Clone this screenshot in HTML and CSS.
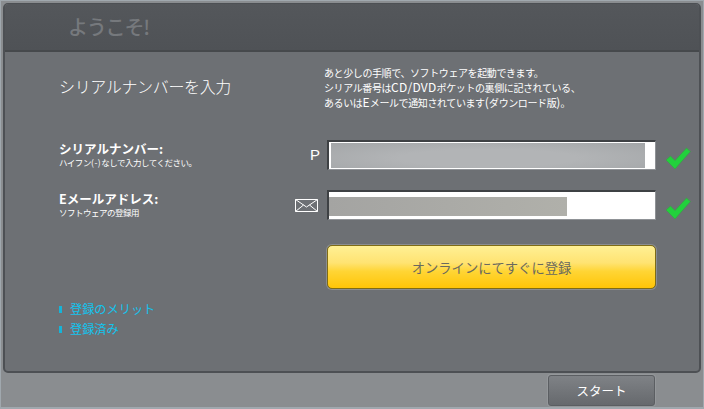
FILE: index.html
```html
<!DOCTYPE html>
<html lang="ja">
<head>
<meta charset="utf-8">
<title>ようこそ!</title>
<link rel="stylesheet" href="styles.css">
</head>
<body>
<div class="window">
  <main class="panel">
    <header class="panel-head"><h1>ようこそ!</h1></header>
    <div class="panel-body">
      <section class="intro">
        <h2>シリアルナンバーを入力</h2>
        <p>あと少しの手順で、ソフトウェアを起動できます。<br>シリアル番号は<span class="lat">CD/DVD</span>ポケットの裏側に記されている、<br>あるいは<span class="lat">E</span>メールで通知されています<span class="lat">(</span>ダウンロード版<span class="lat">)</span>。</p>
      </section>
      <section class="form">
        <div class="row row-serial">
          <div class="label"><strong>シリアルナンバー:</strong><small>ハイフン<span class="par">(-)</span>なしで入力してください。</small></div>
          <span class="prefix">P</span>
          <div class="field"><span class="redact redact-serial"></span></div>
          <svg class="check" viewBox="0 0 26 22"><path d="M1 13 L5.500 9 L10 13.500 L21.500 1 L25.500 4.500 L10 22 Z" fill="#22d13c" stroke="#3f9a4c" stroke-width=".8"/></svg>
        </div>
        <div class="row row-mail">
          <div class="label"><strong>Eメールアドレス:</strong><small>ソフトウェアの登録用</small></div>
          <svg class="prefix-icon" viewBox="0 0 23 13"><path d="M.5.500h22v12H.5zM.5.500l11 7.500 11-7.500M.5 12.500l8-6.500M22.500 12.500l-8-6.500" fill="none" stroke="#fff" stroke-width="1"/></svg>
          <div class="field"><span class="redact redact-mail"></span></div>
          <svg class="check" viewBox="0 0 26 22"><path d="M1 13 L5.500 9 L10 13.500 L21.500 1 L25.500 4.500 L10 22 Z" fill="#22d13c" stroke="#3f9a4c" stroke-width=".8"/></svg>
        </div>
        <div class="cta-row"><button class="cta" type="button">オンラインにてすぐに登録</button></div>
      </section>
      <ul class="links">
        <li><a href="#">登録のメリット</a></li>
        <li><a href="#">登録済み</a></li>
      </ul>
    </div>
  </main>
  <footer class="foot"><button class="start" type="button">スタート</button></footer>
</div>
</body>
</html>
```
FILE: styles.css
```css
* { box-sizing: border-box; }
html, body { margin: 0; height: 100%; }
body {
  width: 704px;
  height: 409px;
  overflow: hidden;
  background: #8a8d90;
  font-family: "Noto Sans CJK JP", "Noto Sans", sans-serif;
  color: #fff;
}
.window {
  height: 409px;
  display: flex;
  flex-direction: column;
  padding: 2px 2px 0 2px;
  border: 1px solid #a0a8ae;
  border-bottom-width: 2px;
}
.panel {
  height: 370px;
  flex: none;
  display: flex;
  flex-direction: column;
  background: #6d7074;
  border: 1px solid #4d5054;
  border-width: 1px 2px 2px 2px;
  border-radius: 5px;
}
.panel-head {
  height: 48px;
  flex: none;
  background: linear-gradient(#54575b, #4f5256);
  border-bottom: 2px solid #46494c;
  border-radius: 4px 4px 0 0;
  padding: 9px 0 0 63px;
}
.panel-head h1 {
  margin: 0;
  font-size: 20px;
  line-height: 28px;
  font-weight: 500;
  color: #76797d;
  letter-spacing: -1.200px;
}
.panel-body {
  flex: 1;
  display: flex;
  flex-direction: column;
  padding: 0 0 0 54px;
}
.intro {
  display: flex;
  height: 76px;
  padding-top: 13px;
}
.intro h2 {
  margin: 10px 0 0;
  width: 265px;
  font-size: 16px;
  line-height: 22px;
  font-weight: 300;
  letter-spacing: -.35px;
}
.intro p {
  margin: 0;
  font-size: 10px;
  line-height: 15px;
  letter-spacing: -.4px;
}
.lat {
  font-size: 12px;
  line-height: 10px;
  letter-spacing: .3px;
}
.row {
  display: flex;
  align-items: center;
}
.row-serial { height: 30px; margin-top: 12px; }
.row-mail { height: 30px; margin-top: 20px; }
.label { width: 240px; flex: none; display: flex; flex-direction: column; margin-top: -1px; }
.label strong { font-size: 12.500px; line-height: 15px; font-weight: 700; letter-spacing: 0; }
.label small { font-size: 8.500px; line-height: 12px; letter-spacing: -.5px; }
.par { letter-spacing: .5px; }
.prefix { width: 28px; font-family: "Liberation Sans", sans-serif; font-size: 15px; line-height: 18px; font-weight: 400; padding-left: 11px; flex: none; }
.prefix-icon { width: 23px; height: 13px; flex: none; margin-left: -4px; margin-right: 9px; }
.field {
  width: 329px;
  height: 30px;
  flex: none;
  background: #fff;
  border: 1px solid #8f9296;
  border-top: 2px solid #3e4144;
  border-left: 2px solid #3e4144;
  display: flex;
  align-items: center;
}
.redact { display: block; }
.redact-serial {
  width: 314px;
  height: 25px;
  margin-left: 2px;
  background: radial-gradient(ellipse at 50% 60%, #b2b4b6 40%, #a3a6a8 100%);
}
.redact-mail {
  width: 238px;
  height: 19px;
  margin-top: 2px;
  background: linear-gradient(90deg, #a4a4a2, #b0b0aa);
}
.check { width: 26px; height: 22px; flex: none; margin-left: 9px; margin-top: 6px; }
.cta-row { margin: 25px 0 0 268px; }
.cta {
  display: block;
  width: 329px;
  height: 44px;
  padding: 1px 0 0;
  font: 400 13.300px "Noto Sans CJK JP", sans-serif;
  color: #6a695f;
  border: 1px solid #7f6c16;
  border-radius: 5px;
  box-shadow: 0 0 0 1px #8b8e91;
  background: linear-gradient(#fff094 0%, #ffe372 40%, #ffd535 60%, #ffc507 100%);
}
.links {
  list-style: none;
  margin: 10px 0 0;
  padding: 0;
}
.links li {
  display: flex;
  align-items: center;
  height: 20px;
}
.links li::before {
  content: "";
  width: 3px;
  height: 7px;
  margin-right: 8px;
  background: #16b4d8;
}
.links a {
  font-size: 12.200px;
  line-height: 20px;
  color: #12c4ee;
  text-decoration: none;
}
.foot {
  flex: 1;
  display: flex;
  justify-content: flex-end;
  padding: 2px 46px 0 0;
}
.start {
  width: 107px;
  height: 31px;
  padding: 0;
  font: 400 12.500px "Noto Sans CJK JP", sans-serif;
  color: #fff;
  border: 1px solid #5b5e62;
  border-radius: 3px;
  box-shadow: 0 0 0 1px #94979a;
  background: linear-gradient(#7f8286, #66696d);
}
```
